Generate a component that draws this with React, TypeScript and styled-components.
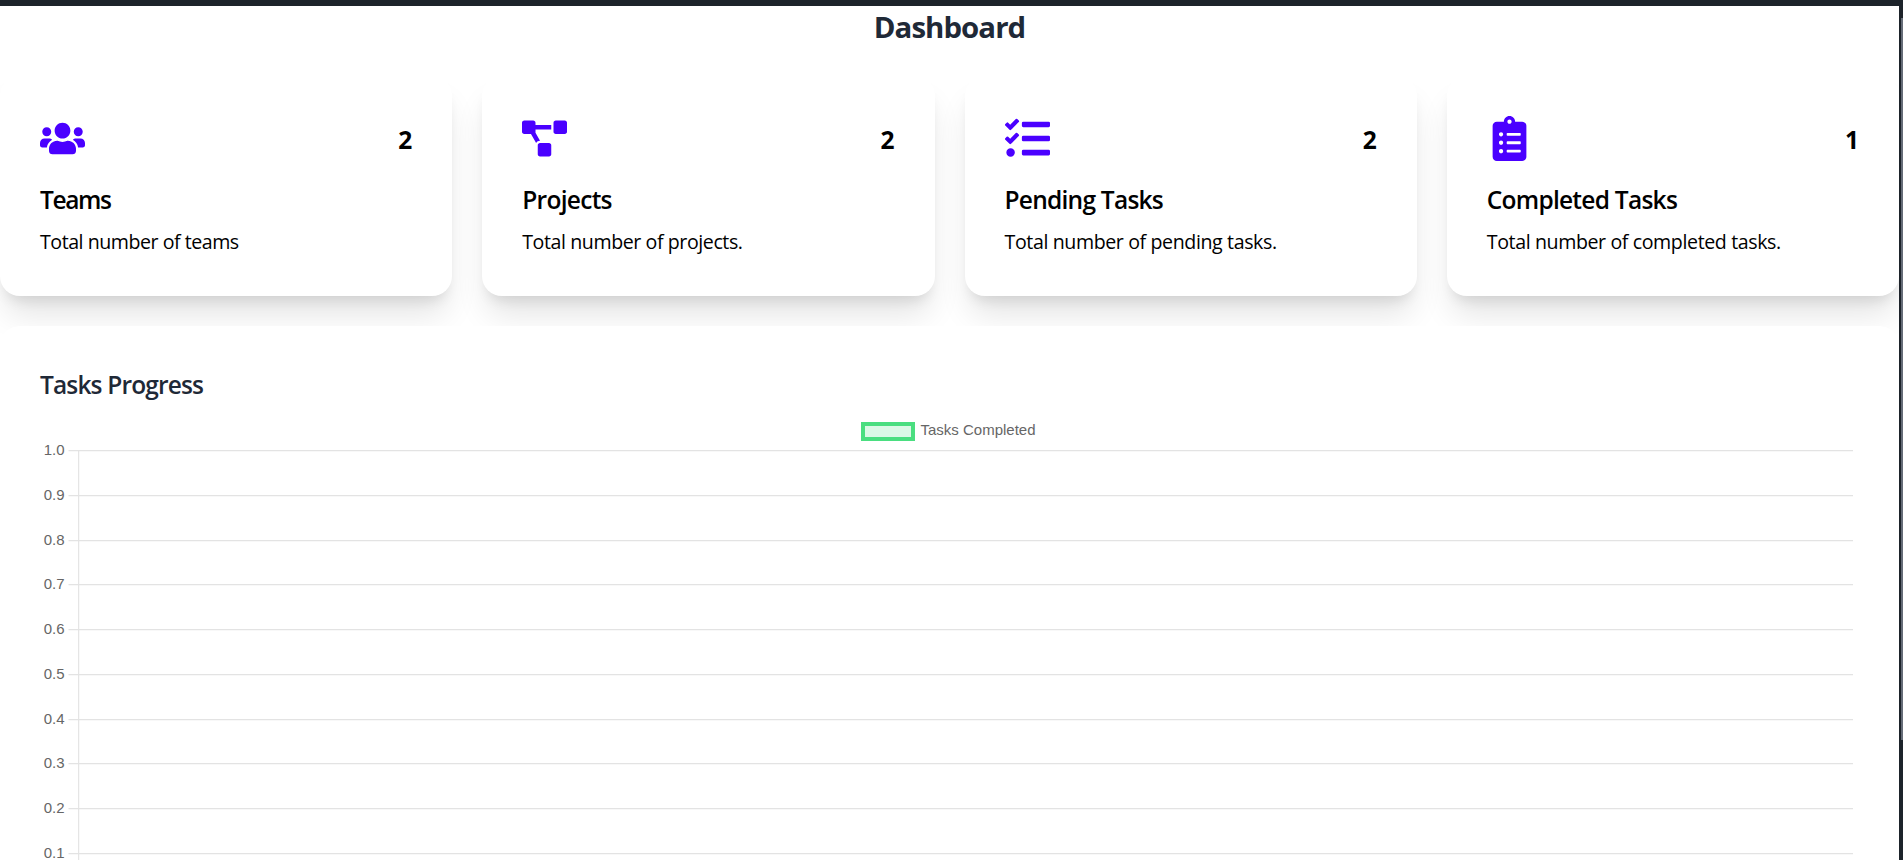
import React from "react";
import styled, { createGlobalStyle } from "styled-components";
import type { IconType } from "react-icons";
import { FaUsers, FaProjectDiagram, FaTasks, FaClipboardList } from "react-icons/fa";

const GlobalStyle = createGlobalStyle`
  *, *::before, *::after { box-sizing: border-box; }
  body {
    margin: 0;
    overflow: hidden;
    background: #1d232a;
    font-family: "Segoe UI", "Open Sans", "Noto Sans", sans-serif;
  }
  h1, h2, p { margin: 0; }
`;

const Shell = styled.div`
  display: flex;
  height: 860px;
  padding-top: 6px;
  background: #1d232a;
  overflow: hidden;
`;

const Page = styled.main`
  width: 1899px;
  flex: none;
  background: #fff;
  overflow: hidden;
`;

const ScrollTrack = styled.div`
  flex: 1;
  padding: 12px 0 0 2px;
`;

const ScrollThumb = styled.div`
  height: 722px;
  background: #656c77;
`;

const PageTitle = styled.h1`
  height: 40px;
  padding-top: 1px;
  line-height: 40px;
  text-align: center;
  font-size: 29.4px;
  font-weight: 700;
  letter-spacing: -0.95px;
  color: #1f2937;
`;

const StatGrid = styled.section`
  display: grid;
  grid-template-columns: repeat(4, 1fr);
  gap: 30px;
  margin-top: 30px;
`;

const StatCard = styled.article`
  height: 220px;
  padding: 40px;
  border-radius: 20px;
  background: #fff;
  color: #000;
  box-shadow: 0 23px 32px -5px rgba(0, 0, 0, 0.11), 0 10px 12.5px -6px rgba(0, 0, 0, 0.1);
`;

const StatHead = styled.div`
  display: flex;
  align-items: center;
  justify-content: space-between;
  height: 45px;

  svg { color: #4a00ff; }
`;

const StatValue = styled.span`
  padding-top: 1px;
  font-size: 24.5px;
  line-height: 35px;
  font-weight: 700;
`;

const StatTitle = styled.h2<{ $spacing: number }>`
  margin-top: 21px;
  font-size: 24.5px;
  line-height: 35px;
  font-weight: 600;
  letter-spacing: ${(p) => p.$spacing}px;
`;

const StatText = styled.p<{ $spacing: number }>`
  margin-top: 10px;
  font-size: 19.6px;
  line-height: 30px;
  letter-spacing: ${(p) => p.$spacing}px;
  white-space: nowrap;
`;

const ProgressCard = styled.section`
  position: relative;
  height: 640px;
  margin-top: 30px;
  padding: 40px;
  border-radius: 20px;
  background: #fff;
`;

const ProgressTitle = styled.h2`
  height: 40px;
  line-height: 38px;
  font-size: 24.5px;
  font-weight: 600;
  letter-spacing: -0.85px;
  color: #1f2937;
`;

const Legend = styled.div`
  display: flex;
  align-items: center;
  justify-content: center;
  gap: 5px;
  height: 20px;
  margin: 15px 2px 0 0;
  color: #666;
  font: 15px/20px "Liberation Sans", Arial, sans-serif;
`;

const LegendBox = styled.span`
  width: 54px;
  height: 19px;
  border: 4px solid #4ade80;
  background: #dbf8e6;
`;

const LegendLabel = styled.span`
  height: 20px;
  line-height: 18px;
`;

const Chart = styled.svg`
  display: block;
  width: 1819px;
  height: 440px;
  overflow: visible;

  text {
    fill: #666;
    font: 15px "Liberation Sans", Arial, sans-serif;
    text-anchor: end;
  }
`;

interface Stat {
  icon: IconType;
  value: number;
  title: string;
  text: string;
  titleSpacing: number;
  textSpacing: number;
}

const stats: Stat[] = [
  { icon: FaUsers, value: 2, title: "Teams", text: "Total number of teams", titleSpacing: -1.4, textSpacing: -0.47 },
  { icon: FaProjectDiagram, value: 2, title: "Projects", text: "Total number of projects.", titleSpacing: -0.72, textSpacing: -0.42 },
  { icon: FaTasks, value: 2, title: "Pending Tasks", text: "Total number of pending tasks.", titleSpacing: -0.75, textSpacing: -0.39 },
  { icon: FaClipboardList, value: 1, title: "Completed Tasks", text: "Total number of completed tasks.", titleSpacing: -0.74, textSpacing: -0.39 },
];

const ticks = ["1.0", "0.9", "0.8", "0.7", "0.6", "0.5", "0.4", "0.3", "0.2", "0.1"];
const TICK_STEP = 44.75;

function ProgressChart() {
  return (
    <Chart>
      <line x1={38.6} x2={38.6} y1={9.5} y2={460} stroke="#e5e5e5" strokeWidth={1.25} />
      {ticks.map((tick, i) => {
        const y = Math.round(9 + i * TICK_STEP) + 0.5;
        return (
          <g key={tick}>
            <line x1={28.5} x2={1813} y1={y} y2={y} stroke="#e3e3e3" strokeWidth={1.25} />
            <text x={24.5} y={y + 4.5}>{tick}</text>
          </g>
        );
      })}
    </Chart>
  );
}

export default function App() {
  return (
    <>
      <GlobalStyle />
      <Shell>
        <Page>
          <PageTitle>Dashboard</PageTitle>
          <StatGrid>
            {stats.map(({ icon: Icon, value, title, text, titleSpacing, textSpacing }) => (
              <StatCard key={title}>
                <StatHead>
                  <Icon size={45} />
                  <StatValue>{value}</StatValue>
                </StatHead>
                <StatTitle $spacing={titleSpacing}>{title}</StatTitle>
                <StatText $spacing={textSpacing}>{text}</StatText>
              </StatCard>
            ))}
          </StatGrid>
          <ProgressCard>
            <ProgressTitle>Tasks Progress</ProgressTitle>
            <Legend>
              <LegendBox />
              <LegendLabel>Tasks Completed</LegendLabel>
            </Legend>
            <ProgressChart />
          </ProgressCard>
        </Page>
        <ScrollTrack>
          <ScrollThumb />
        </ScrollTrack>
      </Shell>
    </>
  );
}
